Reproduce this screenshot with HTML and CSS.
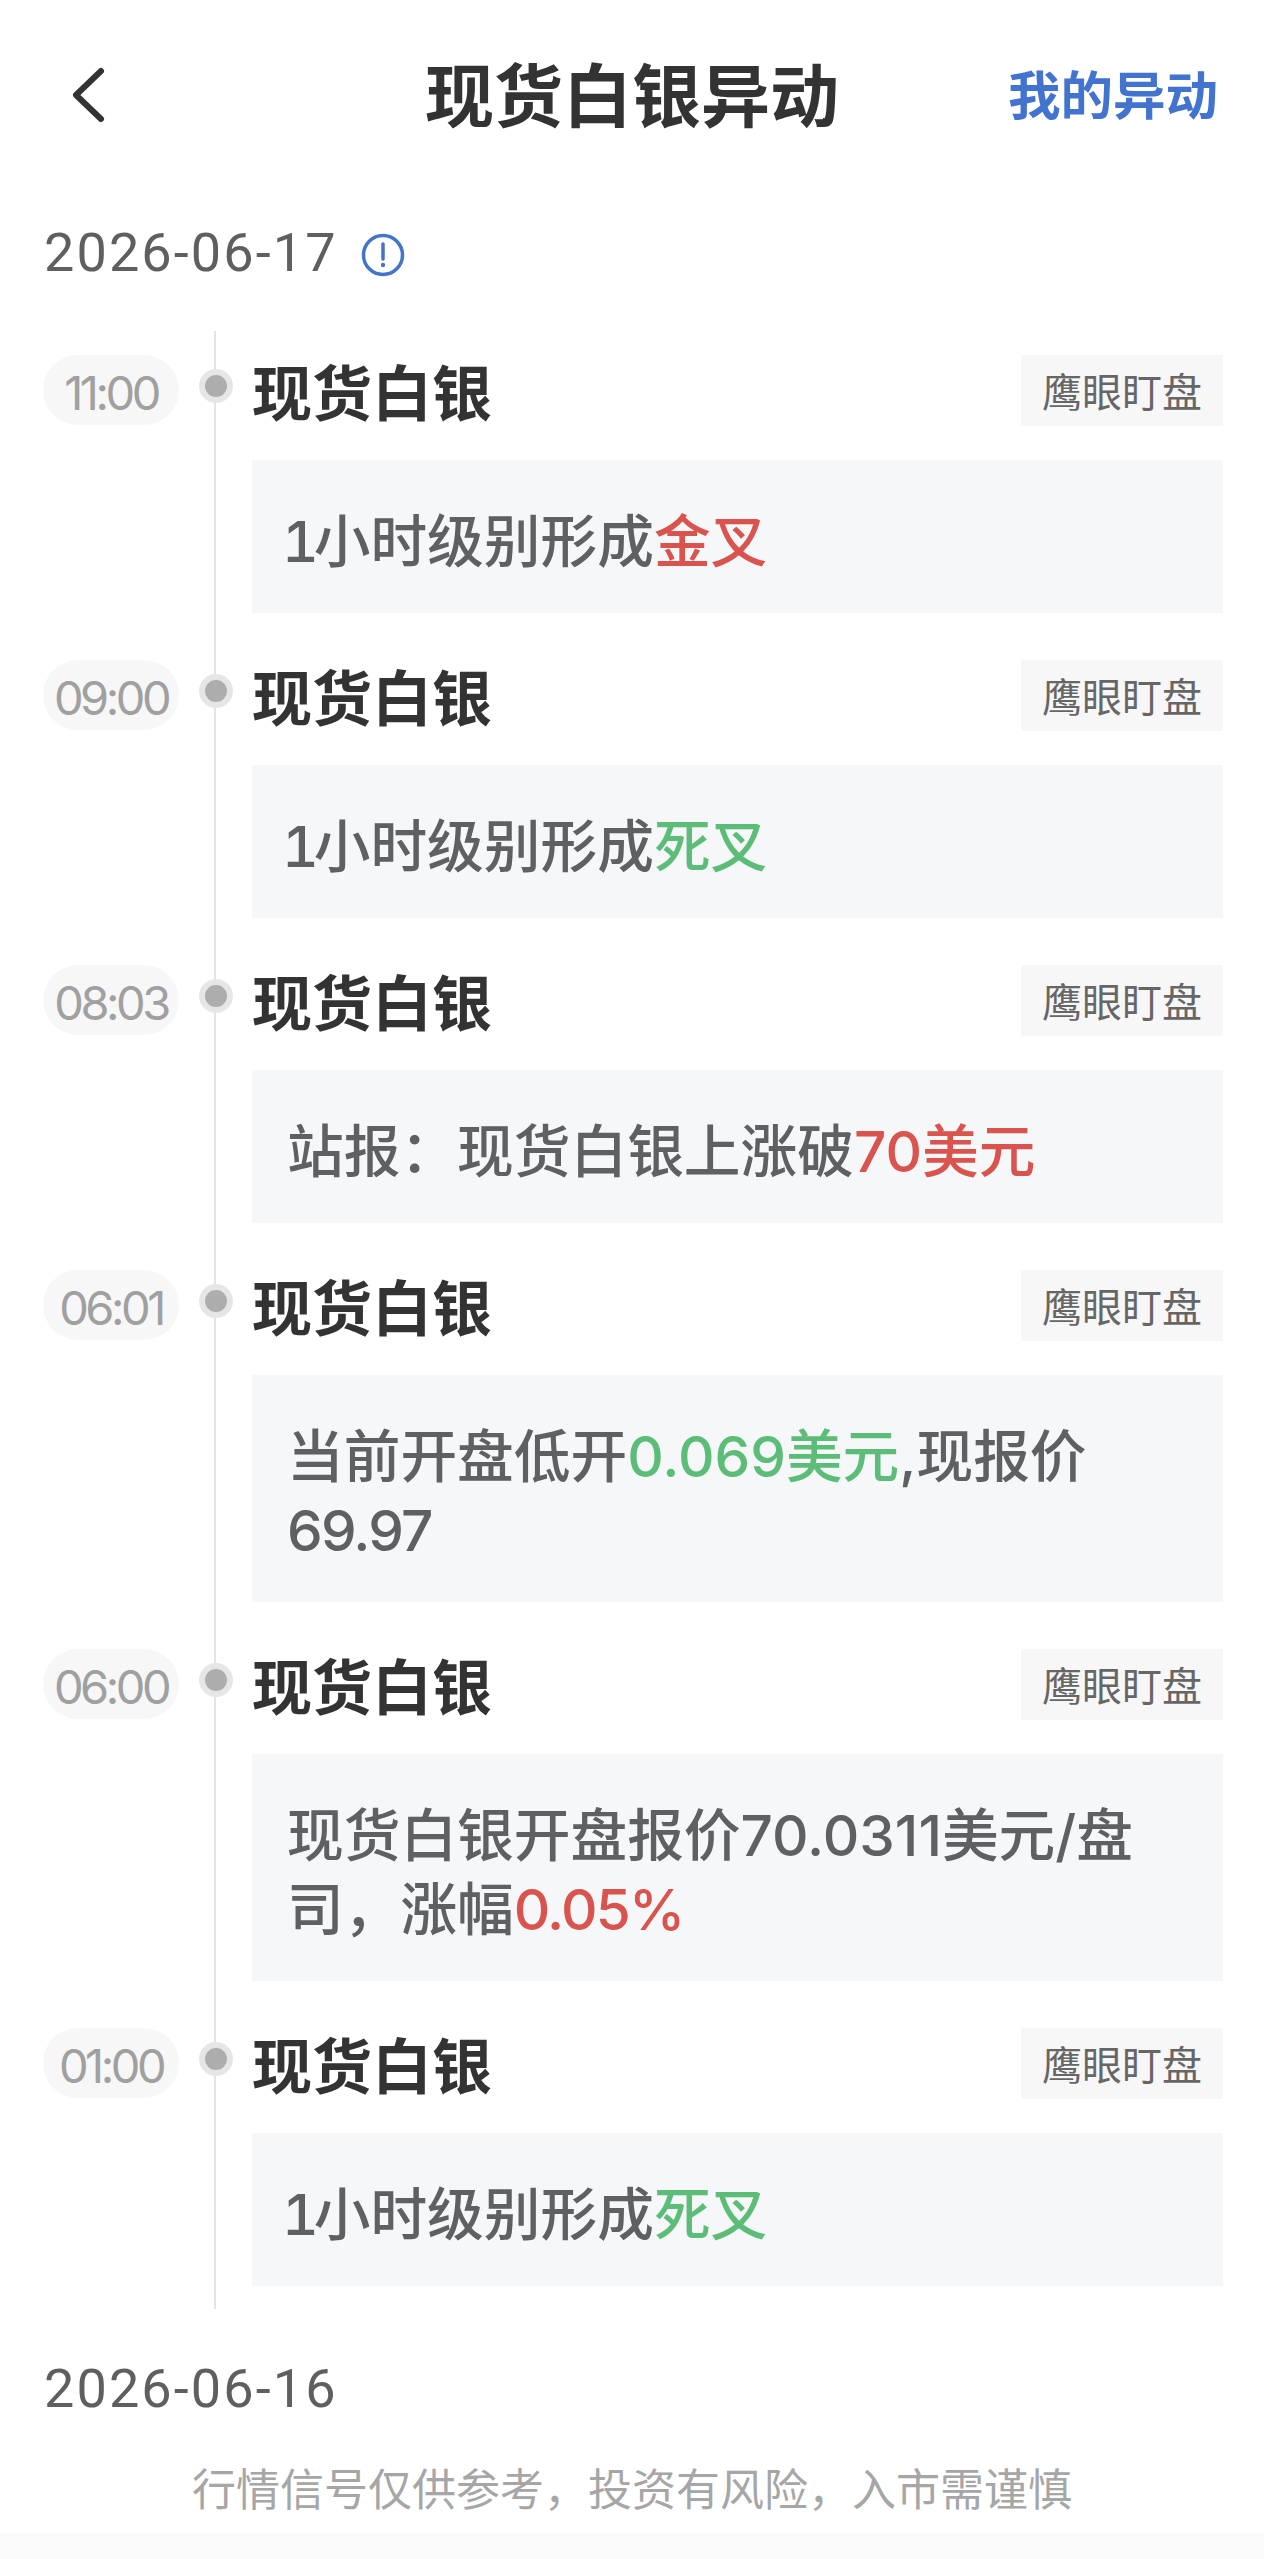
FILE: index.html
```html
<!DOCTYPE html>
<html lang="zh-CN">
<head>
<meta charset="utf-8">
<title>现货白银异动</title>
<link rel="stylesheet" href="styles.css">
</head>
<body>
<div class="page">
  <header class="nav">
    <svg class="back" viewBox="0 0 36 60" width="36" height="60"><path d="M31 6 L6 30 L31 54" fill="none" stroke="#333" stroke-width="6" stroke-linecap="round" stroke-linejoin="round"/></svg>
    <h1 class="title">现货白银异动</h1>
    <a class="mine">我的异动</a>
  </header>
  <div class="date first">
    <span>2026-06-17</span>
    <svg class="info" viewBox="0 0 44 44" width="44" height="44"><circle cx="22" cy="22" r="19.5" fill="none" stroke="#4474c9" stroke-width="3.5"/><path d="M22 11 V26" stroke="#4474c9" stroke-width="3.5" stroke-linecap="round"/><circle cx="22" cy="32" r="2.2" fill="#4474c9"/></svg>
  </div>
  <main class="timeline">
    <article class="row">
      <div class="time-col"><span class="time">11:00</span><i class="dot"></i></div>
      <div class="body">
        <div class="head"><h2>现货白银</h2><span class="tag">鹰眼盯盘</span></div>
        <p class="card"><span class="lead">1</span>小时级别形成<span class="up">金叉</span></p>
      </div>
    </article>
    <article class="row">
      <div class="time-col"><span class="time">09:00</span><i class="dot"></i></div>
      <div class="body">
        <div class="head"><h2>现货白银</h2><span class="tag">鹰眼盯盘</span></div>
        <p class="card"><span class="lead">1</span>小时级别形成<span class="down">死叉</span></p>
      </div>
    </article>
    <article class="row">
      <div class="time-col"><span class="time">08:03</span><i class="dot"></i></div>
      <div class="body">
        <div class="head"><h2>现货白银</h2><span class="tag">鹰眼盯盘</span></div>
        <p class="card">站报&#xFF1A;现货白银上涨破<span class="up">70美元</span></p>
      </div>
    </article>
    <article class="row">
      <div class="time-col"><span class="time">06:01</span><i class="dot"></i></div>
      <div class="body">
        <div class="head"><h2>现货白银</h2><span class="tag">鹰眼盯盘</span></div>
        <p class="card">当前开盘低开<span class="down">0.069美元</span>,现报价<span class="tight">69.97</span></p>
      </div>
    </article>
    <article class="row">
      <div class="time-col"><span class="time">06:00</span><i class="dot"></i></div>
      <div class="body">
        <div class="head"><h2>现货白银</h2><span class="tag">鹰眼盯盘</span></div>
        <p class="card">现货白银开盘报价70.0311美元/盘司&#xFF0C;涨幅<span class="up tight">0.05%</span></p>
      </div>
    </article>
    <article class="row">
      <div class="time-col"><span class="time">01:00</span><i class="dot"></i></div>
      <div class="body">
        <div class="head"><h2>现货白银</h2><span class="tag">鹰眼盯盘</span></div>
        <p class="card"><span class="lead">1</span>小时级别形成<span class="down">死叉</span></p>
      </div>
    </article>
  </main>
  <div class="date second"><span>2026-06-16</span></div>
  <p class="notice">行情信号仅供参考&#xFF0C;投资有风险&#xFF0C;入市需谨慎</p>
  <div class="bottom"></div>
</div>
</body>
</html>
```

FILE: styles.css
```css
* { box-sizing: border-box; }
html, body { margin: 0; padding: 0; background: #fff; }
body { font-family: "Inter", "Noto Sans CJK SC", sans-serif; }
.page { width: 1264px; height: 2559px; display: flex; flex-direction: column; overflow: hidden; }
h1, h2, p { margin: 0; font-weight: inherit; font-size: inherit; }

.nav { height: 185px; padding: 0 46px 0 70px; display: flex; align-items: center; position: relative; flex: none; }
.back { display: block; margin-top: 5px; }
.title { position: absolute; left: 0; right: 0; text-align: center; font-size: 69px; font-weight: 700; color: #333; line-height: 1; font-family: "Noto Sans CJK SC", sans-serif; }
.mine { margin-left: auto; font-size: 52.5px; font-weight: 700; color: #4274cf; line-height: 1; font-family: "Noto Sans CJK SC", sans-serif; }

.date { padding-left: 44px; display: flex; align-items: center; gap: 23px; height: 64px; flex: none; font-family: "Roboto", "Noto Sans CJK SC", sans-serif; font-size: 54px; letter-spacing: 2.1px; color: #5f5f5f; line-height: 64px; }
.date.first { margin-top: 36px; }
.date.second { margin-top: 48px; }
.info { display: block; margin-top: 4px; }

.timeline { margin-top: 46px; display: flex; flex-direction: column; flex: none; position: relative; }
.timeline::before { content: ""; position: absolute; left: 214px; top: 0; bottom: 0; width: 2px; background: #e4e4e4; }
.row { display: flex; padding-top: 24px; padding-bottom: 23px; }
.time-col { width: 252px; flex: none; display: flex; align-items: flex-start; padding-left: 43px; position: relative; }
.time { display: block; width: 136px; height: 70px; border-radius: 35px; background: #f7f7f7; color: #a0a0a0; font-size: 47px; letter-spacing: -3.5px; line-height: 75px; text-align: center; }
.dot { position: absolute; left: 199px; top: 14px; width: 34px; height: 34px; border-radius: 50%; background: #adadad; border: 6px solid #e6e6e6; }
.body { width: 971px; flex: none; }
.head { display: flex; justify-content: space-between; align-items: flex-start; height: 105px; }
.head h2 { font-size: 60px; font-weight: 700; color: #333; line-height: 70px; font-family: "Noto Sans CJK SC", sans-serif; }
.tag { width: 202px; height: 71px; background: #f7f7f7; color: #666; font-size: 40px; line-height: 71px; text-align: center; font-family: "Noto Sans CJK SC", sans-serif; }
.card { background: #f6f7f9; padding: 45px 36px 34px 35px; font-size: 56.7px; font-weight: 500; line-height: 74px; color: #5f6062; }
.lead { font-variant-numeric: tabular-nums; margin-left: -5px; letter-spacing: -5px; }
.tight { letter-spacing: -1.8px; }
.up { color: #d9544f; }
.down { color: #5cbd78; }

.notice { margin-top: 36px; text-align: center; font-size: 44px; line-height: 60px; color: #a6a6a6; font-family: "Noto Sans CJK SC", sans-serif; }
.bottom { margin-top: auto; height: 26px; background: #fafafa; }
```
